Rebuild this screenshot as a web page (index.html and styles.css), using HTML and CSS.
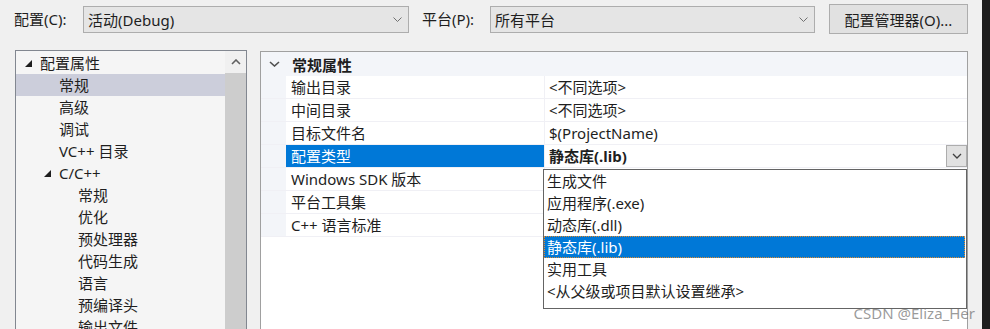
FILE: index.html
```html
<!DOCTYPE html>
<html lang="zh-CN">
<head>
<meta charset="utf-8">
<link rel="stylesheet" href="styles.css">
</head>
<body>

<div class="window">
	<div class="app">

		<div class="toolbar">
			<label class="lbl lbl-config">配置(C):</label>
			<div class="combo combo-config">
				<span>活动(Debug)</span>
				<svg class="chev" width="9" height="5" viewBox="0 0 9 5"><polyline points="0.5,0.5 4.5,4.5 8.5,0.5" /></svg>
			</div>
			<label class="lbl lbl-platform">平台(P):</label>
			<div class="combo combo-platform">
				<span>所有平台</span>
				<svg class="chev" width="9" height="5" viewBox="0 0 9 5"><polyline points="0.5,0.5 4.5,4.5 8.5,0.5" /></svg>
			</div>
			<button class="btn">配置管理器(O)...</button>
		</div>

		<div class="main">
			<!-- left: property tree -->
			<div class="tree">
				<ul class="tree-list">
					<li class="lvl0"><span class="twist"><svg width="8" height="8" viewBox="0 0 8 8"><polygon points="7,0 7,7 0,7" /></svg></span>配置属性</li>
					<li class="lvl1 sel"><span class="twist"></span>常规</li>
					<li class="lvl1"><span class="twist"></span>高级</li>
					<li class="lvl1"><span class="twist"></span>调试</li>
					<li class="lvl1"><span class="twist"></span>VC++ 目录</li>
					<li class="lvl1"><span class="twist"><svg width="8" height="8" viewBox="0 0 8 8"><polygon points="7,0 7,7 0,7" /></svg></span>C/C++</li>
					<li class="lvl2"><span class="twist"></span>常规</li>
					<li class="lvl2"><span class="twist"></span>优化</li>
					<li class="lvl2"><span class="twist"></span>预处理器</li>
					<li class="lvl2"><span class="twist"></span>代码生成</li>
					<li class="lvl2"><span class="twist"></span>语言</li>
					<li class="lvl2"><span class="twist"></span>预编译头</li>
					<li class="lvl2"><span class="twist"></span>输出文件</li>
				</ul>
				<div class="scrollbar">
					<div class="sb-up"><svg width="10" height="6" viewBox="0 0 10 6"><polyline points="1,5 5,1 9,5" /></svg></div>
					<div class="sb-thumb"></div>
				</div>
			</div>

			<!-- right: property grid -->
			<div class="grid">
				<div class="grid-head">
					<span class="head-twist"><svg width="11" height="6" viewBox="0 0 11 6"><polyline points="1,1 5.5,5 10,1" /></svg></span>
					<span class="head-text">常规属性</span>
				</div>
				<div class="row"><span class="gutter"></span><span class="name">输出目录</span><span class="value">&lt;不同选项&gt;</span></div>
				<div class="row"><span class="gutter"></span><span class="name">中间目录</span><span class="value">&lt;不同选项&gt;</span></div>
				<div class="row"><span class="gutter"></span><span class="name">目标文件名</span><span class="value">$(ProjectName)</span></div>
				<div class="row row-sel">
					<span class="gutter"></span><span class="name">配置类型</span>
					<span class="value"><b>静态库(.lib)</b>
						<span class="drop-btn"><svg width="10" height="6" viewBox="0 0 10 6"><polyline points="1,1 5,5 9,1" /></svg></span>
					</span>
				</div>
				<div class="row"><span class="gutter"></span><span class="name">Windows SDK 版本</span><span class="value"></span></div>
				<div class="row"><span class="gutter"></span><span class="name">平台工具集</span><span class="value"></span></div>
				<div class="row"><span class="gutter"></span><span class="name">C++ 语言标准</span><span class="value"></span></div>

				<ul class="dropdown">
					<li>生成文件</li>
					<li>应用程序(.exe)</li>
					<li>动态库(.dll)</li>
					<li class="picked">静态库(.lib)</li>
					<li>实用工具</li>
					<li>&lt;从父级或项目默认设置继承&gt;</li>
				</ul>
			</div>
		</div>

		<div class="watermark">CSDN @Eliza_Her</div>
	</div>
	<div class="edge"></div>
</div>

</body>
</html>
```

FILE: styles.css
```css
html, body {
	margin: 0;
	padding: 0;
	height: 100%;
	overflow: hidden;
}

body {
	background: #f0f0f0;
	color: #1e1e1e;
	font-family: "Noto Sans", "Noto Sans CJK SC", sans-serif;
	font-size: 15px;
}

.window {
	display: flex;
	width: 990px;
	height: 329px;
}

.app {
	position: relative;
	width: 982px;
	height: 100%;
}

.edge {
	flex: 1;
	background: #1e1e1e;
}

/* top toolbar */
.toolbar {
	display: flex;
	align-items: center;
	height: 38px;
	padding-left: 14px;
}

.lbl {
	line-height: 20px;
}
.lbl-config {
	width: 69px;
}
.lbl-platform {
	width: 68px;
	margin-left: 13px;
}

.combo {
	display: flex;
	align-items: center;
	justify-content: space-between;
	box-sizing: border-box;
	height: 27px;
	padding: 0 6px 0 4px;
	background: #e5e5e5;
	border: 1px solid #adadad;
}
.combo-config {
	width: 326px;
}
.combo-platform {
	width: 325px;
}
.chev polyline {
	fill: none;
	stroke: #707070;
	stroke-width: 1;
}

.btn {
	box-sizing: border-box;
	width: 139px;
	height: 30px;
	margin-left: 14px;
	padding: 0;
	background: #e1e1e1;
	border: 1px solid #adadad;
	font: inherit;
	color: #1e1e1e;
}

/* main area */
.main {
	display: flex;
	align-items: flex-start;
	margin-top: 12px;
	padding-left: 15px;
}

.tree {
	display: flex;
	box-sizing: border-box;
	width: 232px;
	height: 300px;
	background: #f5f5f5;
	border: 1px solid #828790;
}

.tree-list {
	list-style: none;
	margin: 0;
	padding: 1px 0 0;
	width: 209px;
}
.tree-list li {
	display: flex;
	align-items: center;
	height: 22px;
	line-height: 22px;
	white-space: nowrap;
}
.tree-list .sel {
	background: #cccedb;
}
.lvl0 { padding-left: 9px; }
.lvl1 { padding-left: 28px; }
.lvl2 { padding-left: 47px; }

.twist {
	display: flex;
	width: 15px;
	height: 22px;
	align-items: center;
	padding-top: 2px;
	box-sizing: border-box;
}
.twist polygon {
	fill: #1e1e1e;
}

.scrollbar {
	width: 21px;
	background: #cdcdcd;
}
.sb-up {
	display: flex;
	align-items: center;
	justify-content: center;
	height: 22px;
	background: #f0f0f0;
}
.sb-up polyline {
	fill: none;
	stroke: #606060;
	stroke-width: 1.6;
}

/* property grid */
.grid {
	position: relative;
	box-sizing: border-box;
	width: 708px;
	height: 300px;
	margin: 1px 0 0 13px;
	background: #fff;
	border-left: 1px solid #a0a0a0;
	border-top: 1px solid #a0a0a0;
	border-right: 1px solid #a0a0a0;
}

.grid-head {
	display: flex;
	align-items: center;
	height: 24px;
	background: #f3f5f9;
}
.head-twist {
	display: flex;
	justify-content: center;
	width: 25px;
	padding-left: 1px;
}
.head-twist polyline {
	fill: none;
	stroke: #505050;
	stroke-width: 1.6;
}
.head-text {
	padding-left: 5px;
	font-weight: bold;
}

.row {
	display: flex;
	box-sizing: border-box;
	height: 23px;
	border-bottom: 1px solid #f0f0f5;
	line-height: 22px;
}
.gutter {
	width: 25px;
	background: #f3f5f9;
}
.name {
	box-sizing: border-box;
	width: 258px;
	padding-left: 5px;
	white-space: nowrap;
}
.value {
	display: flex;
	justify-content: space-between;
	flex: 1;
	padding-left: 4px;
	border-left: 1px solid #f0f0f5;
	white-space: nowrap;
}

.row-sel .name {
	background: #0078d7;
	color: #fff;
}
.drop-btn {
	display: flex;
	align-items: center;
	justify-content: center;
	box-sizing: border-box;
	width: 21px;
	height: 22px;
	background: #e1e1e1;
	border: 1px solid #adadad;
}
.drop-btn polyline {
	fill: none;
	stroke: #404040;
	stroke-width: 1.3;
}

/* open dropdown */
.dropdown {
	position: absolute;
	left: 282px;
	top: 117px;
	box-sizing: border-box;
	width: 424px;
	height: 140px;
	margin: 0;
	padding: 0;
	list-style: none;
	background: #fff;
	border: 1px solid #646464;
}
.dropdown li {
	height: 22px;
	line-height: 22px;
	padding-left: 3px;
	white-space: nowrap;
}
.dropdown .picked {
	box-sizing: border-box;
	background: #0078d7;
	color: #fff;
	outline: 1px dotted #e08a2c;
	outline-offset: -1px;
	margin-right: 1px;
}

.watermark {
	position: absolute;
	right: 7px;
	bottom: 6px;
	color: rgba(110, 110, 110, 0.7);
	font-family: "Noto Sans", sans-serif;
	font-size: 15px;
	line-height: 20px;
}
```
